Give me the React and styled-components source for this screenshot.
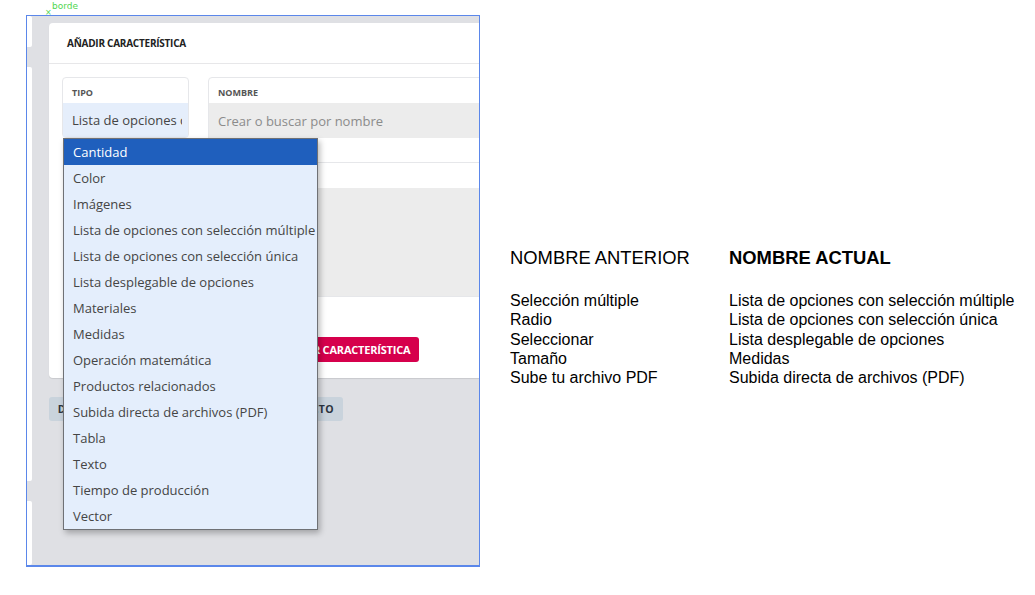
import React from 'react';
import styled, { createGlobalStyle } from 'styled-components';

const GlobalStyle = createGlobalStyle`
  html, body {
    margin: 0;
    padding: 0;
    background: #ffffff;
  }
  body {
    width: 1035px;
    height: 595px;
    overflow: hidden;
    font-family: "Open Sans", "Liberation Sans", sans-serif;
  }
`;

const Page = styled.div`
  position: relative;
  display: flex;
  align-items: flex-start;
  padding: 15px 0 0 26px;
`;

const Note = styled.span`
  position: absolute;
  left: 52px;
  top: 1px;
  font-family: "DejaVu Sans", sans-serif;
  font-size: 9px;
  color: #4fd64f;
`;

const NoteMark = styled.span`
  position: absolute;
  left: 45px;
  top: 8px;
  font-family: "DejaVu Sans", sans-serif;
  font-size: 8px;
  color: #4fd64f;
`;

const Frame = styled.div`
  box-sizing: border-box;
  width: 454px;
  height: 552px;
  flex-shrink: 0;
  display: flex;
  overflow: hidden;
  background: #dfe0e4;
  border: 1px solid #5b87ea;
  border-bottom-width: 2px;
`;

const Strip = styled.div`
  width: 5px;
  flex-shrink: 0;
  display: flex;
  flex-direction: column;
`;

const StripPart = styled.div`
  background: ${({ gray }) => (gray ? '#dfe0e4' : '#ffffff')};
  height: ${({ h }) => (h ? `${h}px` : 'auto')};
  flex: ${({ h }) => (h ? '0 0 auto' : '1')};
  border-radius: ${({ gray }) => (gray ? '0' : '0 2px 2px 0')};
`;

const Main = styled.div`
  flex: 1;
  min-width: 0;
  padding: 7px 0 0 17px;
  display: flex;
  flex-direction: column;
`;

const Card = styled.div`
  width: 480px;
  height: 355px;
  flex-shrink: 0;
  background: #ffffff;
  border-radius: 4px 0 0 4px;
  box-shadow: 0 1px 1px rgba(0, 0, 0, 0.1);
  display: flex;
  flex-direction: column;
`;

const CardHeader = styled.div`
  height: 40px;
  display: flex;
  align-items: center;
  padding-left: 18px;
  border-bottom: 1px solid #e7e7e9;
  font-size: 10px;
  font-weight: 700;
  letter-spacing: -0.25px;
  color: #222;
`;

const CardBody = styled.div`
  padding: 13px 0 0 13px;
  display: flex;
  flex-direction: column;
`;

const Fields = styled.div`
  display: flex;
  gap: 19px;
  align-items: flex-start;
`;

const Field = styled.div`
  position: relative;
  box-sizing: border-box;
  width: ${({ width }) => width};
  flex-shrink: 0;
  border: 1px solid #e6e7ea;
  border-radius: 4px;
  background: #ffffff;
`;

const Label = styled.div`
  box-sizing: border-box;
  height: 25px;
  display: flex;
  align-items: center;
  padding: 4px 0 0 9px;
  font-size: 9px;
  font-weight: 700;
  color: #555;
`;

const SelectValue = styled.div`
  height: 34px;
  display: flex;
  align-items: center;
  padding: 0 6px 0 9px;
  background: #e5eefb;
  font-size: 13px;
  color: #444;
`;

const ValueText = styled.span`
  flex: 1;
  min-width: 0;
  overflow: hidden;
  white-space: nowrap;
`;

const Input = styled.div`
  height: 35px;
  display: flex;
  align-items: center;
  padding-left: 9px;
  background: #ececec;
  font-size: 13px;
  color: #8b8b8b;
`;

const Line = styled.div`
  height: ${({ h }) => h}px;
  background: ${({ gray }) => (gray ? '#ececec' : '#ffffff')};
  border-bottom: ${({ ruled }) => (ruled ? '1px solid #e6e7ea' : 'none')};
`;

const Footer = styled.div`
  display: flex;
  padding: 40px 0 0 207px;
`;

const Primary = styled.button`
  height: 25px;
  padding: 0 9px;
  border: none;
  border-radius: 3px;
  background: #d6004c;
  color: #ffffff;
  font-family: "Open Sans", sans-serif;
  font-size: 11px;
  font-weight: 700;
  letter-spacing: -0.2px;
`;

const Tab = styled.div`
  margin-top: 19px;
  width: 294px;
  height: 24px;
  border-radius: 3px;
  background: #c9d3dc;
  display: flex;
  align-items: center;
  justify-content: center;
  font-size: 10.5px;
  font-weight: 700;
  letter-spacing: 0.45px;
  color: #2b3440;
  white-space: nowrap;
  overflow: hidden;
`;

const Menu = styled.ul`
  position: absolute;
  left: 0;
  top: 60px;
  z-index: 5;
  width: 255px;
  box-sizing: border-box;
  margin: 0;
  padding: 0;
  list-style: none;
  background: #e4eefc;
  border: 1px solid #6f7175;
  box-shadow: 2px 3px 6px rgba(0, 0, 0, 0.28);
`;

const Option = styled.li`
  height: 26px;
  display: flex;
  align-items: center;
  padding-left: 9px;
  font-size: 13px;
  white-space: nowrap;
  color: ${({ active }) => (active ? '#ffffff' : '#454545')};
  background: ${({ active }) => (active ? '#1f5fbd' : 'transparent')};
`;

const Notes = styled.div`
  margin: 232px 0 0 30px;
  display: grid;
  grid-template-columns: 219px auto;
  font-family: "Liberation Sans", Arial, sans-serif;
  color: #000;
`;

const Head = styled.div`
  font-size: 18.4px;
  line-height: 21px;
  font-weight: ${({ bold }) => (bold ? 700 : 400)};
  margin-bottom: 23px;
`;

const Cell = styled.div`
  font-size: 16px;
  line-height: 19.3px;
  white-space: nowrap;
`;

const options = [
  'Cantidad',
  'Color',
  'Imágenes',
  'Lista de opciones con selección múltiple',
  'Lista de opciones con selección única',
  'Lista desplegable de opciones',
  'Materiales',
  'Medidas',
  'Operación matemática',
  'Productos relacionados',
  'Subida directa de archivos (PDF)',
  'Tabla',
  'Texto',
  'Tiempo de producción',
  'Vector',
];

const renames = [
  ['Selección múltiple', 'Lista de opciones con selección múltiple'],
  ['Radio', 'Lista de opciones con selección única'],
  ['Seleccionar', 'Lista desplegable de opciones'],
  ['Tamaño', 'Medidas'],
  ['Sube tu archivo PDF', 'Subida directa de archivos (PDF)'],
];

export default function App() {
  return (
    <Page>
      <GlobalStyle />
      <NoteMark>×</NoteMark>
      <Note>borde</Note>
      <Frame>
        <Strip>
          <StripPart h={31} />
          <StripPart gray h={20} />
          <StripPart />
          <StripPart gray h={20} />
          <StripPart h={64} />
        </Strip>
        <Main>
          <Card>
            <CardHeader>AÑADIR CARACTERÍSTICA</CardHeader>
            <CardBody>
              <Fields>
                <Field width="127px">
                  <Label>TIPO</Label>
                  <SelectValue>
                    <ValueText>Lista de opciones con selección múltiple</ValueText>
                  </SelectValue>
                  <Menu>
                    {options.map((o, i) => (
                      <Option key={o} active={i === 0}>
                        {o}
                      </Option>
                    ))}
                  </Menu>
                </Field>
                <Field width="300px">
                  <Label>NOMBRE</Label>
                  <Input>Crear o buscar por nombre</Input>
                  <Line h={24} ruled />
                  <Line h={25} />
                  <Line h={108} gray />
                </Field>
              </Fields>
              <Footer>
                <Primary>AÑADIR CARACTERÍSTICA</Primary>
              </Footer>
            </CardBody>
          </Card>
          <Tab>DUPLICAR CARACTERÍSTICAS DE OTRO PRODUCTO</Tab>
        </Main>
      </Frame>
      <Notes>
        <Head>NOMBRE ANTERIOR</Head>
        <Head bold>NOMBRE ACTUAL</Head>
        {renames.map(([a, b]) => (
          <React.Fragment key={a}>
            <Cell>{a}</Cell>
            <Cell>{b}</Cell>
          </React.Fragment>
        ))}
      </Notes>
    </Page>
  );
}
